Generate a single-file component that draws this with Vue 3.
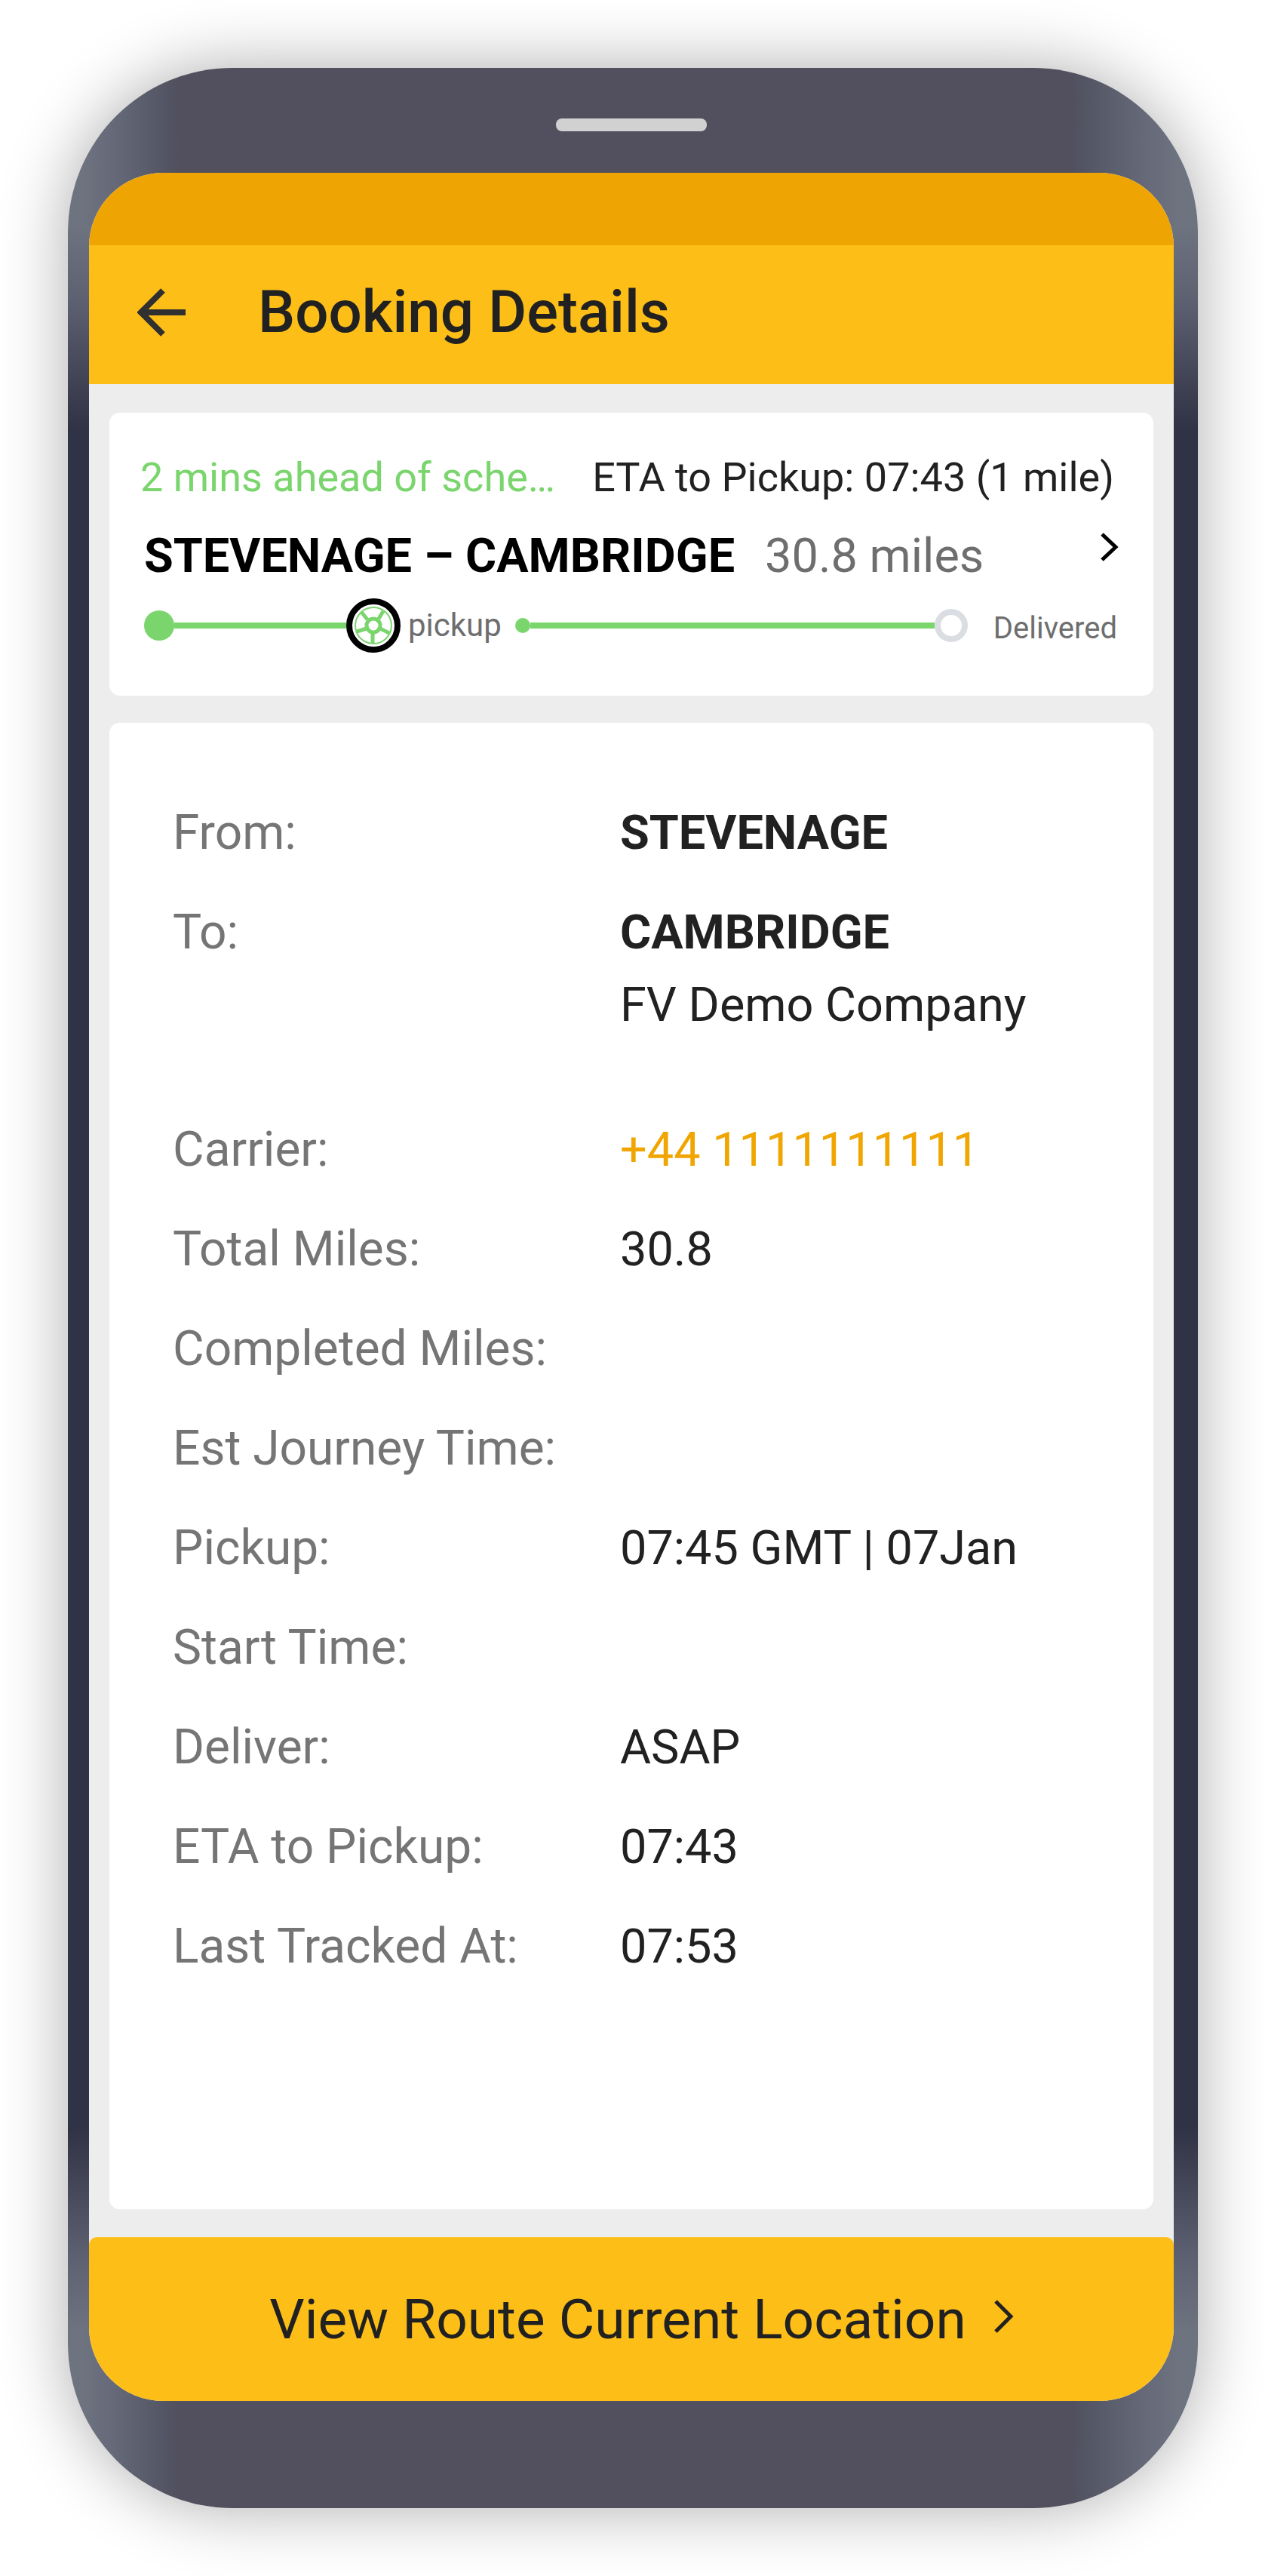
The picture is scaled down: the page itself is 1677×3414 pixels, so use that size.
<script setup>
const details = [
  { label: 'From:', value: 'STEVENAGE', strong: true },
  { label: 'To:', value: 'CAMBRIDGE', strong: true, note: 'FV Demo Company' },
  { label: 'Carrier:', value: '+44 1111111111', href: 'tel:+441111111111' },
  { label: 'Total Miles:', value: '30.8' },
  { label: 'Completed Miles:', value: '' },
  { label: 'Est Journey Time:', value: '' },
  { label: 'Pickup:', value: '07:45 GMT | 07Jan' },
  { label: 'Start Time:', value: '' },
  { label: 'Deliver:', value: 'ASAP' },
  { label: 'ETA to Pickup:', value: '07:43' },
  { label: 'Last Tracked At:', value: '07:53' },
]
</script>

<template>
  <div class="page">
    <div class="phone">
      <div class="speaker"></div>
      <div class="screen">
        <div class="status-bar"></div>
        <header class="app-bar">
          <button class="icon-button" type="button" aria-label="Back">
            <svg width="64" height="64" viewBox="0 0 64 64" fill="none" stroke="#303030" stroke-width="8">
              <path d="M64 32H6M34 3L5 32l29 29" />
            </svg>
          </button>
          <h1>Booking Details</h1>
        </header>

        <main>
          <section class="card summary">
            <div class="timing">
              <span class="ahead">2 mins ahead of sche…</span>
              <span>ETA to Pickup: 07:43 (1 mile)</span>
            </div>
            <div class="route">
              <h2>STEVENAGE – CAMBRIDGE</h2>
              <span class="distance">30.8 miles</span>
              <button class="icon-button" type="button" aria-label="Open booking">
                <svg width="24" height="40" viewBox="0 0 24 40" fill="none" stroke="#000" stroke-width="5">
                  <path d="M2 3l18 17L2 37" />
                </svg>
              </button>
            </div>
            <div class="progress">
              <span class="dot"></span>
              <span class="track first"></span>
              <svg class="wheel" width="72" height="72" viewBox="0 0 72 72" fill="none">
                <circle cx="36" cy="36" r="32" stroke="#000" stroke-width="8" />
                <g stroke="#7ad56d">
                  <circle cx="36" cy="36" r="24" stroke-width="2" />
                  <path d="M35 46v14M43 27l6-10M28 28l-8-10M27 40l-13 4M45 40l12 6" stroke-width="5" />
                  <circle cx="36" cy="36" r="9" stroke-width="5" />
                </g>
              </svg>
              <span class="stop">pickup</span>
              <span class="dot small"></span>
              <span class="track"></span>
              <span class="ring"></span>
              <span class="stop delivered">Delivered</span>
            </div>
          </section>

          <dl class="card details">
            <div v-for="item in details" :key="item.label" class="row" :class="{ spaced: item.note }">
              <dt>{{ item.label }}</dt>
              <dd>
                <a v-if="item.href" :href="item.href">{{ item.value }}</a>
                <strong v-else-if="item.strong">{{ item.value }}</strong>
                <template v-else>{{ item.value }}</template>
                <div v-if="item.note">{{ item.note }}</div>
              </dd>
            </div>
          </dl>
        </main>

        <button class="cta" type="button">
          View Route Current Location
          <svg width="28" height="46" viewBox="0 0 28 46" fill="none" stroke="#212121" stroke-width="5">
            <path d="M3 3l20 20L3 43" />
          </svg>
        </button>
      </div>
    </div>
  </div>
</template>

<style>
body {
  margin: 0;
  background: #fff;
}
</style>

<style scoped>
.page {
  padding: 90px 89px 90px 90px;
  font-family: Roboto, "Liberation Sans", sans-serif;
  color: #212121;
}

.phone {
  padding: 67px 32px 142px 28px;
  border-radius: 218px;
  background:
    linear-gradient(#6e7380, #5d6070 100px, #303245 270px, #303245 calc(100% - 270px), #5d6070 calc(100% - 100px), #6e7380)
      0 210px / 100% calc(100% - 445px) no-repeat,
    linear-gradient(90deg, #6e7380 20px, #656978 60px, #535564 130px, #52505e 146px, #52505e calc(100% - 166px), #535564 calc(100% - 150px), #656978 calc(100% - 70px), #6e7380 calc(100% - 26px));
  box-shadow: 0 0 90px rgba(0, 0, 0, 0.33);
}

.speaker {
  width: 200px;
  height: 17px;
  margin: 0 auto 55px;
  border-radius: 8px;
  background: #d1d1d1;
}

.screen {
  overflow: hidden;
  border-radius: 98px;
  background: #ededed;
}

.status-bar {
  height: 96px;
  background: #eea403;
}

.app-bar {
  display: flex;
  align-items: center;
  gap: 96px;
  height: 184px;
  padding: 0 64px 6px;
  box-sizing: border-box;
  background: #fdbe18;
}

h1,
h2 {
  margin: 0;
}

h1 {
  font-size: 78px;
  font-weight: 500;
  line-height: 96px;
}

.icon-button {
  display: flex;
  padding: 0;
  border: 0;
  background: none;
}

main {
  display: grid;
  gap: 36px;
  padding: 38px 27px 37px;
}

.card {
  margin: 0;
  border-radius: 14px;
  background: #fff;
}

.summary {
  padding: 50px 46px 57px;
}

.timing {
  display: flex;
  justify-content: space-between;
  padding-right: 6px;
  margin-left: -5px;
  font-size: 54px;
  line-height: 72px;
  white-space: nowrap;
}

.ahead {
  color: #7ad56d;
}

.route {
  display: flex;
  align-items: center;
  gap: 40px;
  margin: 28px 0 16px;
  font-size: 63px;
  line-height: 80px;
  white-space: nowrap;
}

h2 {
  font-size: 63px;
  font-weight: 700;
  color: #000;
}

.distance {
  flex: 1;
  color: #6e6e6e;
}

.route .icon-button {
  padding-bottom: 24px;
}

.progress {
  display: flex;
  align-items: center;
  height: 72px;
  padding-right: 2px;
}

.dot {
  width: 40px;
  height: 40px;
  border-radius: 50%;
  background: #7ad56d;
}

.dot.small {
  width: 20px;
  height: 20px;
  margin-left: 18px;
}

.track {
  flex: 1;
  height: 8px;
  background: #7ad56d;
}

.track.first {
  flex: 0 0 228px;
}

.ring {
  width: 28px;
  height: 28px;
  border: 8px solid #dadde2;
  border-radius: 50%;
}

.stop {
  margin-left: 10px;
  font-size: 42px;
  line-height: 48px;
  color: #6e6e6e;
}

.stop.delivered {
  padding-top: 8px;
  margin-left: 34px;
  font-size: 40px;
}

.details {
  display: grid;
  gap: 36px;
  padding: 98px 84px 300px;
  font-size: 64px;
  line-height: 96px;
}

.row {
  display: grid;
  grid-template-columns: 593px 1fr;
}

.row.spaced {
  margin-bottom: 60px;
}

dt {
  color: #757575;
}

dd {
  margin: 0;
  font-size: 63px;
}

a {
  color: #f0a500;
  text-decoration: none;
}

.cta {
  display: flex;
  align-items: center;
  justify-content: center;
  gap: 36px;
  width: 100%;
  height: 217px;
  padding: 0 0 0 28px;
  border: 0;
  border-radius: 10px 10px 0 0;
  background: #fdbe18;
  color: #212121;
  font-family: inherit;
  font-size: 73px;
  line-height: 88px;
}

.cta svg {
  margin-bottom: 8px;
}
</style>
